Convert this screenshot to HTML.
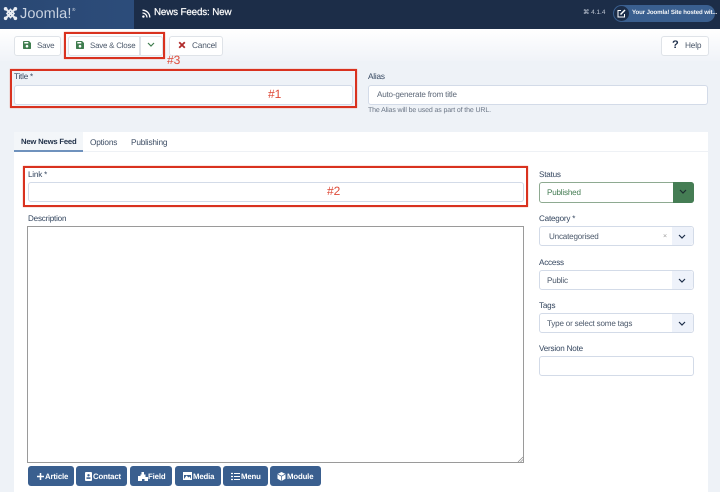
<!DOCTYPE html>
<html lang="en"><head><meta charset="utf-8"><title>News Feeds: New</title>
<style>
*{box-sizing:border-box}
html,body{margin:0;padding:0}
body{width:720px;height:492px;overflow:hidden;background:#eef2f7;font-family:"Liberation Sans",sans-serif;position:relative;color:#3c4a60;text-rendering:geometricPrecision}
#p{position:absolute;left:0;top:0;width:720px;height:492px;filter:blur(.35px);overflow:hidden}
.a{position:absolute}
.t{position:absolute;white-space:nowrap;font-size:8.2px;line-height:12px;letter-spacing:-.2px}
.lb{color:#34465f}
.in{position:absolute;background:#fff;border:1px solid #d3dbe8;border-radius:3px}
.btn{position:absolute;background:#fff;border:1px solid #dfe3e8;border-radius:3px;top:36px;height:20px}
.red{position:absolute;border:2px solid #d9321f;box-shadow:0 0 1px #e8806f}
.rn{position:absolute;color:#de4a38;font-size:12px;line-height:14px;white-space:nowrap}
.cv{position:absolute;right:0;top:0;bottom:0;width:21px;background:#eef2fa;border-radius:0 3px 3px 0}
.cv svg,.dk svg{position:absolute;left:6px;top:7px}
.b{position:absolute;top:466px;height:20px;background:#3a5f8f;border-radius:3px;color:#fff;font-size:7.8px;font-weight:bold;line-height:21px;white-space:nowrap;letter-spacing:-.15px}
.b svg{position:absolute;top:5px}
.b span{position:absolute;top:0}
</style></head><body><div id="p">

<div class="a" style="left:0;top:0;width:720px;height:29px;background:#1c2d48"></div>
<div class="a" style="left:0;top:0;width:134px;height:29px;background:linear-gradient(90deg,#2a4873,#2c4c7a)"></div>

<svg class="a" style="left:3px;top:6px" width="15" height="15" viewBox="0 0 15 15"><g stroke="#e8ecf2" stroke-width="2.1" fill="none" stroke-linecap="round"><path d="M3.5 3.5L11.5 11.5"/><path d="M11.5 3.5L3.5 11.5"/><path d="M7.5 3.5L11 7.5L7.5 11.5L4 7.5Z" stroke-width="1.6"/></g><circle cx="2.6" cy="2.8" r="1.8" fill="#e8ecf2"/><circle cx="12.4" cy="2.8" r="1.8" fill="#e8ecf2"/><circle cx="2.6" cy="12.3" r="1.8" fill="#e8ecf2"/><circle cx="12.4" cy="12.3" r="1.8" fill="#e8ecf2"/></svg>
<div class="t" style="left:20px;top:5px;font-size:14.5px;line-height:18px;color:#c9d3e1;letter-spacing:.1px">Joomla!</div>
<div class="t" style="left:72px;top:7px;font-size:4.5px;line-height:6px;color:#cfd7e2;letter-spacing:0">®</div>

<svg class="a" style="left:142px;top:9px" width="9" height="9" viewBox="0 0 9 9"><circle cx="1.4" cy="7.6" r="1.2" fill="#fff"/><path d="M.5 4A4.5 4.5 0 0 1 5 8.5M.5 1.2A7.3 7.3 0 0 1 7.8 8.5" stroke="#fff" stroke-width="1.3" fill="none"/></svg>
<div class="t" style="left:154px;top:6px;font-size:9.8px;line-height:14px;color:#fff;-webkit-text-stroke:.2px #fff;letter-spacing:-.14px">News Feeds: New</div>

<div class="t" style="left:583px;top:7px;font-size:6.4px;color:#c3cbd8;letter-spacing:0">⌘ 4.1.4</div>
<div class="a" style="left:613px;top:5px;width:102px;height:17px;border-radius:9px;background:#3a5f8f"></div>
<div class="a" style="left:614px;top:6px;width:15px;height:15px;border-radius:8px;background:#1c2d48"></div>
<svg class="a" style="left:617px;top:9px" width="9" height="9" viewBox="0 0 9 9"><path d="M4 1.5H1V8H7.5V5" stroke="#fff" stroke-width="1" fill="none"/><path d="M3.5 5.5L8 1" stroke="#fff" stroke-width="1.5"/></svg>
<div class="t" style="left:632px;top:7px;font-size:6.1px;color:#fff;font-weight:bold;opacity:.95;letter-spacing:-.1px">Your Joomla! Site hosted wit...</div>

<div class="a" style="left:0;top:29px;width:720px;height:32px;background:linear-gradient(#fff,#f0f3f8)"></div>

<div class="btn" style="left:14px;width:47px"></div>
<svg class="a" style="left:23px;top:41px" width="8" height="8" viewBox="0 0 8 8"><path d="M0 .8Q0 0 .8 0H6L8 2V7.2Q8 8 7.2 8H.8Q0 8 0 7.2Z" fill="#3f7d4e"/><circle cx="4" cy="5.2" r="1.3" fill="#fff"/><rect x="1.3" y="1" width="4" height="1.5" fill="#fff"/></svg>
<div class="t" style="left:37px;top:40px;color:#4d5a6c;font-size:8px">Save</div>

<div class="btn" style="left:68px;width:72px;border-radius:3px 0 0 3px"></div>
<div class="btn" style="left:140px;width:23px;border-radius:0 3px 3px 0"></div>
<svg class="a" style="left:76px;top:41px" width="8" height="8" viewBox="0 0 8 8"><path d="M0 .8Q0 0 .8 0H6L8 2V7.2Q8 8 7.2 8H.8Q0 8 0 7.2Z" fill="#3f7d4e"/><circle cx="4" cy="5.2" r="1.3" fill="#fff"/><rect x="1.3" y="1" width="4" height="1.5" fill="#fff"/></svg>
<div class="t" style="left:90px;top:40px;color:#4d5a6c;font-size:7.9px">Save &amp; Close</div>
<svg class="a" style="left:147px;top:42px" width="8" height="6" viewBox="0 0 8 6"><path d="M1 1L4 4L7 1" stroke="#3f7d4e" stroke-width="1.2" fill="none"/></svg>

<div class="btn" style="left:169px;width:54px"></div>
<svg class="a" style="left:178px;top:41px" width="8" height="8" viewBox="0 0 8 8"><path d="M1.2 1.2L6.8 6.8M6.8 1.2L1.2 6.8" stroke="#b02a2a" stroke-width="1.8"/></svg>
<div class="t" style="left:192px;top:39px;color:#4d5a6c;font-size:8.3px">Cancel</div>

<div class="btn" style="left:661px;width:48px"></div>
<div class="t" style="left:672px;top:38px;color:#1c2d48;font-size:11px;line-height:15px;font-weight:bold;letter-spacing:0">?</div>
<div class="t" style="left:685px;top:39px;color:#4d5a6c;font-size:8.3px">Help</div>

<div class="red" style="left:64px;top:32px;width:101px;height:27px"></div>
<div class="rn" style="left:167px;top:53px">#3</div>

<div class="t lb" style="left:14px;top:70.5px;font-size:8.1px">Title *</div>
<div class="in" style="left:14px;top:85px;width:339px;height:20px"></div>
<div class="red" style="left:10px;top:69px;width:347px;height:39px"></div>
<div class="rn" style="left:268px;top:87px">#1</div>

<div class="t lb" style="left:368px;top:70.5px">Alias</div>
<div class="in" style="left:368px;top:85px;width:340px;height:20px"></div>
<div class="t" style="left:377px;top:88.5px;color:#5d6878;font-size:8.1px">Auto-generate from title</div>
<div class="t" style="left:368px;top:105px;color:#6a7585;font-size:7px;letter-spacing:-.12px">The Alias will be used as part of the URL.</div>

<div class="a" style="left:14px;top:132px;width:694px;height:360px;background:#fff"></div>
<div class="a" style="left:14px;top:132px;width:694px;height:20px;background:#fff;border-bottom:1px solid #eef1f5"></div>
<div class="a" style="left:14px;top:132px;width:69px;height:20px;background:#f3f6f9;border-bottom:2px solid #6f92bd"></div>
<div class="t" style="left:21px;top:136px;color:#22324a;font-weight:bold;font-size:7.7px">New News Feed</div>
<div class="t" style="left:90px;top:136px;color:#3f4f66;font-size:8.3px">Options</div>
<div class="t" style="left:131px;top:136px;color:#3f4f66;font-size:8.3px">Publishing</div>

<div class="t lb" style="left:28px;top:168.5px;font-size:8.1px">Link *</div>
<div class="in" style="left:28px;top:182px;width:496px;height:20px"></div>
<div class="red" style="left:23px;top:166px;width:505px;height:41px"></div>
<div class="rn" style="left:327px;top:184px">#2</div>

<div class="t lb" style="left:28px;top:213px;font-size:8.1px">Description</div>
<div class="a" style="left:27px;top:226px;width:497px;height:237px;border:1px solid #9a9a9a;background:#fff"></div>
<svg class="a" style="left:517px;top:456px" width="6" height="6" viewBox="0 0 6 6"><path d="M1 6L6 1M3.5 6L6 3.5" stroke="#888" stroke-width=".7"/></svg>

<div class="b" style="left:28px;width:46px"><svg style="left:8px;top:6px" width="9" height="9" viewBox="0 0 9 9"><path d="M4.5 1V8M1 4.5H8" stroke="#fff" stroke-width="1.5"/></svg><span style="left:17px">Article</span></div>
<div class="b" style="left:76px;width:51px"><svg style="left:8px;top:6px" width="8" height="9" viewBox="0 0 8 9"><rect x="1" y="0" width="7" height="9" rx="1" fill="#fff"/><circle cx="4.5" cy="3.3" r="1.2" fill="#3a5f8f"/><rect x="2.5" y="5.3" width="4" height="1.6" fill="#3a5f8f"/></svg><span style="left:17px">Contact</span></div>
<div class="b" style="left:130px;width:42px"><svg style="left:8px;top:6px" width="10" height="9" viewBox="0 0 10 9"><path d="M3.5 0H6V2.5H7.5V5H10V9H6.5V7H4V9H0V4H2.5V2.5H3.5Z" fill="#fff"/></svg><span style="left:18px">Field</span></div>
<div class="b" style="left:175px;width:46px"><svg style="left:8px;top:6px" width="9" height="8" viewBox="0 0 9 8"><rect x=".5" y=".5" width="8" height="7" fill="none" stroke="#fff"/><path d="M1 7L3.5 3.5L5.5 5.5L6.5 4.5L8 7Z" fill="#fff"/><rect x="1" y="1" width="7" height="2" fill="#fff"/></svg><span style="left:18px">Media</span></div>
<div class="b" style="left:223px;width:45px"><svg style="left:8px;top:6px" width="9" height="9" viewBox="0 0 9 9"><path d="M3 1.5H9M3 4.5H9M3 7.5H9" stroke="#fff"/><path d="M0 1.5H2M0 4.5H2M0 7.5H2" stroke="#fff" stroke-width="1.3"/></svg><span style="left:18px">Menu</span></div>
<div class="b" style="left:270px;width:51px"><svg style="left:7px;top:6px" width="9" height="9" viewBox="0 0 9 9"><path d="M4.5 0L8.5 2V6.8L4.5 9L.5 6.8V2Z" fill="#fff"/><path d="M.8 2.2L4.5 4.2L8.2 2.2M4.5 4.2V8.8" stroke="#3a5f8f" stroke-width=".7" fill="none"/></svg><span style="left:17px">Module</span></div>

<div class="t lb" style="left:539px;top:168.5px;font-size:8.1px">Status</div>
<div class="a" style="left:539px;top:182px;width:155px;height:21px;background:#fff;border:1px solid #8eaa91;border-radius:3px"></div>
<div class="dk a" style="left:673px;top:182px;width:21px;height:21px;background:#457d54;border-radius:0 3px 3px 0"><svg width="8" height="6" viewBox="0 0 8 6"><path d="M1 1L4 4L7 1" stroke="#1c2d30" stroke-width="1.2" fill="none"/></svg></div>
<div class="t" style="left:547px;top:186.5px;color:#457d54;font-size:8.1px">Published</div>

<div class="t lb" style="left:539px;top:213px;font-size:8.1px">Category *</div>
<div class="in" style="left:539px;top:226px;width:155px;height:20px"><div class="cv"><svg width="8" height="6" viewBox="0 0 8 6"><path d="M1 1L4 4L7 1" stroke="#1c2d48" stroke-width="1.2" fill="none"/></svg></div></div>
<div class="t" style="left:549px;top:230.5px;color:#4d5a6c;font-size:8.1px">Uncategorised</div>
<div class="t" style="left:663px;top:231px;color:#999;font-size:7px;letter-spacing:0">×</div>

<div class="t lb" style="left:539px;top:257px;font-size:8.1px">Access</div>
<div class="in" style="left:539px;top:270px;width:155px;height:20px"><div class="cv"><svg width="8" height="6" viewBox="0 0 8 6"><path d="M1 1L4 4L7 1" stroke="#1c2d48" stroke-width="1.2" fill="none"/></svg></div></div>
<div class="t" style="left:547px;top:274.5px;color:#4d5a6c;font-size:8.1px">Public</div>

<div class="t lb" style="left:539px;top:300px;font-size:8.1px">Tags</div>
<div class="in" style="left:539px;top:313px;width:155px;height:20px"><div class="cv"><svg width="8" height="6" viewBox="0 0 8 6"><path d="M1 1L4 4L7 1" stroke="#1c2d48" stroke-width="1.2" fill="none"/></svg></div></div>
<div class="t" style="left:547px;top:317.5px;color:#4d5a6c;font-size:8.1px">Type or select some tags</div>

<div class="t lb" style="left:539px;top:343px;font-size:8.1px">Version Note</div>
<div class="in" style="left:539px;top:356px;width:155px;height:20px"></div>

</div></body></html>
